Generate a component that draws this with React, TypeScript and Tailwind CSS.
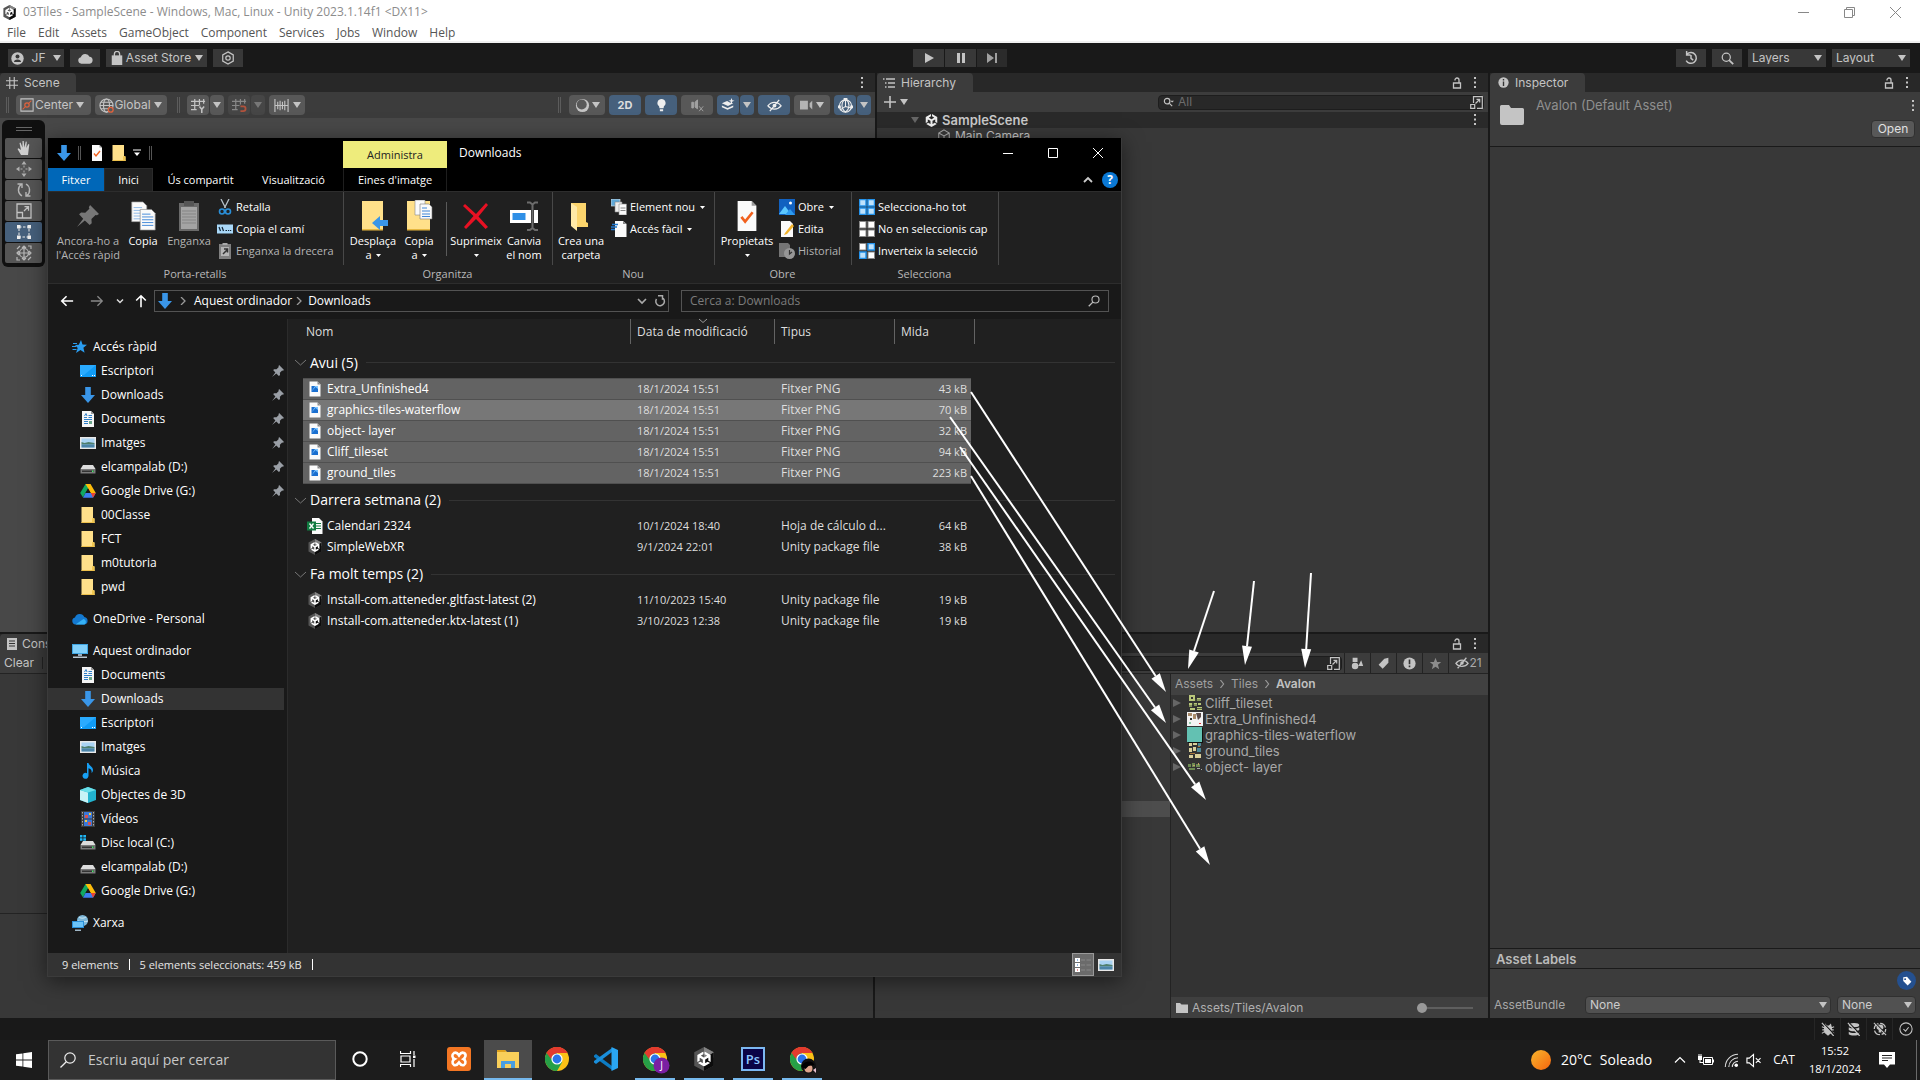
import React from "react";
import { SiUnity } from "react-icons/si";

type Kids = { children?: React.ReactNode };

function Ico({ s = 16, c = "", vb = "0 0 16 16", children }: Kids & { s?: number; c?: string; vb?: string }) {
  return (
    <svg width={s} height={s} viewBox={vb} className={"shrink-0 " + c} fill="none" aria-hidden="true">
      {children}
    </svg>
  );
}

const Caret = ({ c = "text-[#c4c4c4]" }: { c?: string }) => (
  <svg width="8" height="6" viewBox="0 0 8 6" className={"shrink-0 " + c} aria-hidden="true"><path d="M0 0h8L4 6z" fill="currentColor" /></svg>
);
const TinyCaret = () => (
  <svg width="5" height="3" viewBox="0 0 5 3" className="shrink-0" aria-hidden="true"><path d="M0 0h5L2.500 3z" fill="#fff" /></svg>
);
const Dots = () => (
  <Ico s={12} vb="0 0 12 12"><path d="M5 0h2v2H5zM5 4.500h2v2H5zM5 9h2v2H5z" fill="#c4c4c4" /></Ico>
);
const Lock = () => (
  <Ico s={12} vb="0 0 12 12"><path d="M2.500 6h7v5h-7zM4 3.500V3a2 2 0 0 1 4 0v3" stroke="#c4c4c4" strokeWidth="1.300" /></Ico>
);
const Popout = () => (
  <Ico s={13} vb="0 0 13 13"><path d="M3.500 7V.7h8.800v11.600H7M.7 8.500h4v3.800h-4zM5.500 7.500l4-4M6.500 3.300h3.200v3.200" stroke="#c4c4c4" strokeWidth="1.200" /></Ico>
);

/* ---------- Explorer icons ---------- */
const DownArrow = ({ s = 16 }: { s?: number }) => (
  <Ico s={s}><path d="M5.200 0h5.600v8H15l-7 8-7-8h4.200z" fill="#3a96e8" /></Ico>
);
const Folder = ({ s = 16 }: { s?: number }) => (
  <Ico s={s}><path d="M1.500 0H13v11l1.500.5V16h-13z" fill="#ffe08a" /><path d="M13 11l1.500.5V16H12v-4.500z" fill="#f0c650" /><path d="M1.500 15h13v1h-13z" fill="#eec14c" /></Ico>
);
const Desktop = () => (
  <Ico><path d="M0 2h16v12H0z" fill="#109bf5" /><path d="M0 2h16L4 12H0z" fill="#2aabff" /><path d="M1 12.500h1M12 12.500h1M14 12.500h1" stroke="#fff" /></Ico>
);
const Doc = () => (
  <Ico><path d="M2 0h9l3 3v13H2z" fill="#f5f5f5" /><path d="M11 0v3h3z" fill="#999" /><path d="M4 6.500h3M8.500 4.500H12M8.500 6.500H12M4 8.500h8M4 10.500h4M4 12.500h4" stroke="#2f7fc8" /><path d="M4.500 5L6 2.500 7 5" stroke="#2f7fc8" /><path d="M9 10h3v3H9z" fill="#6aa58a" /></Ico>
);
const Picture = () => (
  <Ico><path d="M0 2h16v12H0z" fill="#e8e8e8" /><path d="M1.500 3.500h13v9h-13z" fill="#a9d3f3" /><path d="M1.500 7l3 1 4-1 6 1v1.500h-13z" fill="#4f7f6d" /><path d="M1.500 9.500h13v3h-13z" fill="#4b84a8" /></Ico>
);
const Drive = ({ win = false }: { win?: boolean }) => (
  <Ico>
    {win && <path d="M0 0h2.500v2.500H0zM3.300 0h2.700v2.500H3.300zM0 3.300h2.500v2.500H0zM3.300 3.300h2.700v2.500H3.300z" fill="#1fb6f5" />}
    <path d="M3 6h10l2.500 4H.5z" fill="#dcdcdc" /><path d="M.5 10h15v4.500H.5z" fill="#7b7b7b" /><path d="M2 11.500h12v1.500H2z" fill="#333" /><path d="M12 11.500h1.500V13H12z" fill="#46e36a" />
  </Ico>
);
const GDrive = () => (
  <Ico><path d="M5.500 1h5L8 5.500 3 14.500.2 10z" fill="#11a861" /><path d="M5.500 1h5l5.300 9h-5z" fill="#fdbc0b" /><path d="M5.500 10h10.300L13 14.700H3z" fill="#3c7ff0" /><path d="M10.800 10h5L13 14.700z" fill="#ea4335" /><path d="M8 5.500L10.500 10h-5z" fill="#191919" /></Ico>
);
const Star = () => (
  <Ico><path d="M9 1l1.500 4.500 4.500.2-3.600 3 1.200 5L8.500 11 4 14l1.700-5L3 6l3.800-.3z" fill="#2a9df0" /><path d="M0 7.500h4M.5 10.500h4M1 4.500h4" stroke="#2a9df0" /></Ico>
);
const Cloud = () => (
  <Ico><path d="M3.500 13.500A3.500 3.500 0 0 1 3 6.600 5 5 0 0 1 12.300 6 3.800 3.800 0 0 1 12.500 13.500z" fill="#1479d0" /><path d="M3.500 13.500l8-5.500a3 3 0 0 1 1 5.500z" fill="#35b1f5" /></Ico>
);
const Pc = () => (
  <Ico><path d="M0 1h16v10H0z" fill="#3fa5e2" /><path d="M1 2h14v8H1z" fill="#82d0fa" /><path d="M6 11h4v2H6z" fill="#9ab" /><path d="M1 13.500h14V15H1z" fill="#b9c7d2" /></Ico>
);
const Note = () => (
  <Ico><path d="M7 0h1.500c.5 3 4.500 3.500 4.500 7 0 1.500-.8 2.600-1.500 3 .6-2.500-.5-4-3-4.700V12.500A3 3 0 1 1 7 10.200z" fill="#17a0f5" /></Ico>
);
const Cube = () => (
  <Ico><path d="M8 0l8 3v10l-8 3-8-3V3z" fill="#22b3cf" /><path d="M0 3l8 2.500V16l-8-3z" fill="#c7f3f7" /><path d="M8 0l8 3-8 2.500L0 3z" fill="#6adfe9" /></Ico>
);
const Film = () => (
  <Ico><path d="M1 0h14v16H1z" fill="#3c3c3c" /><path d="M4 1h8v6.500H4zM4 8.500h8V15H4z" fill="#3b78d8" /><path d="M5 4h3v3H5zM8 11h3v3H8z" fill="#d9534f" /><path d="M9 2h2v2H9zM5 9h2v2H5z" fill="#f2c744" /><path d="M2.500 1v14M13.500 1v14" stroke="#aaa" strokeDasharray="1.500 1.500" /></Ico>
);
const Net = () => (
  <Ico><circle cx="10.500" cy="5.500" r="5.500" fill="#7db7d8" /><path d="M7 2c2 2 6 1 7 0M6 6c3 1 7 1 10 0" stroke="#d4ecf7" /><path d="M0 6h12v7H0z" fill="#2a8fd8" /><path d="M1 7h10v5H1z" fill="#6cc4f8" /><path d="M3 14.500h6V16H3z" fill="#9fb6c6" /></Ico>
);
const Pin = ({ s = 12, c = "#9a9fa6" }: { s?: number; c?: string }) => (
  <Ico s={s}><path d="M9.500 0L16 6.500l-1.500 1-1-.3-3 3 .2 3-1.500 1.300-3.500-3.300L0 16l4.500-6L1.500 6.800 3 5.500l3 .2 3-3-.4-1z" fill={c} /></Ico>
);
const Png = () => (
  <Ico><path d="M2.500.5h8l3 3v12h-11z" fill="#fafafa" /><path d="M10.500.5v3h3z" fill="#888" /><path d="M4.500 5h6.500v6H4.500z" fill="#1a6fd0" /><path d="M4.500 10.500L8.500 6l2.500 2V5H8z" fill="#7cc4ff" /></Ico>
);
const Xls = () => (
  <Ico><path d="M5 0h7l3.500 3.500V16H5z" fill="#fafafa" /><path d="M9 5.500h5M9 8h5M9 10.500h5" stroke="#107c41" /><path d="M0 3.500h9v9H0z" fill="#107c41" /><path d="M2.500 5.500l4 5M6.500 5.500l-4 5" stroke="#fff" strokeWidth="1.300" /></Ico>
);
const UnityCube = ({ s = 16 }: { s?: number }) => (
  <Ico s={s}>
    <path d="M8 0l6.500 3.500v9L8 16l-6.500-3.500v-9z" fill="#555" /><path d="M8 0l6.500 3.500V7L8 8z" fill="#858585" /><path d="M8 8l6.500-4.500v9L8 16z" fill="#0c0c0c" />
    <SiUnity x={3} y={3} size={10} color="#fff" />
  </Ico>
);
const PageCheck = ({ s = 16 }: { s?: number }) => (
  <Ico s={s}><path d="M3 0h7.500L13 2.500V16H3z" fill="#fafafa" /><path d="M10.500 0v2.500H13z" fill="#999" /><path d="M5 8.500l2 2.500 4-5" stroke="#f1601d" strokeWidth="1.400" /></Ico>
);
const Pages = ({ s = 16 }: { s?: number }) => (
  <Ico s={s} vb="0 0 32 32"><path d="M4 1h12l4 4v17H4z" fill="#fafafa" stroke="#999" strokeWidth=".7" /><path d="M6 7h9M6 10h12M6 13h8M6 16h8M6 19h8" stroke="#8db9e8" /><path d="M13 9h12l4 4v18H13z" fill="#fafafa" stroke="#888" strokeWidth=".7" /><path d="M15 14h9M15 17h12M15 20h12M15 23h12M15 26h12" stroke="#3f86d8" /></Ico>
);

const Chrome = ({ s = 24, children }: Kids & { s?: number }) => (
  <Ico s={s + 3} vb="0 0 27 27">
    <circle cx="12" cy="12" r="12" fill="#fbc116" />
    <path d="M12 12L1.600 6A12 12 0 0 0 12 24l5.200-9z" fill="#26a047" />
    <path d="M1.600 6A12 12 0 0 1 22.400 6H12L7 9z" fill="#e33b2e" />
    <path d="M1.600 6l5.200 9L12 12V6z" fill="#26a047" />
    <path d="M1.600 6A12 12 0 0 1 22.400 6H12l-4 2-2 4z" fill="#e33b2e" />
    <circle cx="12" cy="12" r="5.600" fill="#fff" />
    <circle cx="12" cy="12" r="4.400" fill="#2b75ea" />
    {children}
  </Ico>
);

/* ---------- Unity chrome ---------- */
const TB = ({ w, children, label, dim = false }: Kids & { w: string; label: string; dim?: boolean }) => (
  <button aria-label={label} className={"flex h-[18px] shrink-0 items-center justify-center gap-1 " + w + (dim ? " bg-[#2b2b2b]" : " bg-[#383838]")}>{children}</button>
);
const SB = ({ w, children, label, on = false, dim = false }: Kids & { w: string; label: string; on?: boolean; dim?: boolean }) => (
  <button aria-label={label} className={"flex h-5 shrink-0 items-center justify-center gap-0.5 rounded-sm " + w + (on ? " bg-[#46607c]" : dim ? " bg-[#464646]" : " bg-[#585858]")}>{children}</button>
);
const Grip = () => <span className="h-4 w-[3px] shrink-0 border-x border-[#5c5c5c]" />;

function Select({ label, value, w, c }: { label: string; value: string; w: string; c: string }) {
  return (
    <div className={"relative flex items-center " + w}>
      <select aria-label={label} defaultValue={value} className={"w-full appearance-none pl-1 pr-5 leading-none " + c}>
        <option>{value}</option>
      </select>
      <span className="pointer-events-none absolute right-1"><Caret /></span>
    </div>
  );
}

function TabRow({ icon, title, w, right }: { icon: React.ReactNode; title: string; w: string; right?: React.ReactNode }) {
  return (
    <div className="flex h-[19px] shrink-0 items-center justify-between bg-[#282828]">
      <h2 className={"flex h-full items-center gap-1.5 overflow-hidden rounded-t-sm bg-[#3c3c3c] pl-1.5 whitespace-nowrap " + w}>{icon}{title}</h2>
      <div className="flex items-center gap-1.5 pr-[7px]">{right}</div>
    </div>
  );
}

const MENU = ["File", "Edit", "Assets", "GameObject", "Component", "Services", "Jobs", "Window", "Help"];

function UnityTop() {
  return (
    <>
      <header className="shrink-0 border-b-2 border-[#f0f0f0] bg-white font-['Open_Sans',sans-serif] text-[12px] text-[#555]">
        <div className="flex h-6 items-center justify-between">
          <div className="flex items-center gap-1.5 pl-0.5 text-[#8c8c8c]"><UnityCube s={15} />03Tiles - SampleScene - Windows, Mac, Linux - Unity 2023.1.14f1 &lt;DX11&gt;</div>
          <div className="flex h-5 items-center gap-[33px] pr-[18px] text-[#888]">
            <button aria-label="Minimize"><Ico s={13} vb="0 0 13 13"><path d="M1 6.500h11" stroke="currentColor" /></Ico></button>
            <button aria-label="Restore"><Ico s={13} vb="0 0 13 13"><path d="M1.500 3.500h8v8h-8zM3.500 3V1.500h8v8H10" stroke="currentColor" /></Ico></button>
            <button aria-label="Close"><Ico s={13} vb="0 0 13 13"><path d="M1 1l11 11M12 1L1 12" stroke="currentColor" /></Ico></button>
          </div>
        </div>
        <nav className="flex h-[17px] items-center gap-3 pl-[7px]">{MENU.map((m) => <button key={m}>{m}</button>)}</nav>
      </header>
      <div className="grid h-[30px] shrink-0 grid-cols-[1fr_94px_1fr] items-center bg-[#191919]">
        <div className="flex items-center gap-1.5 pl-2">
          <TB w="w-14" label="Account"><Ico s={13} vb="0 0 13 13"><circle cx="6.500" cy="6.500" r="6.200" fill="#c4c4c4" /><circle cx="6.500" cy="4.500" r="2" fill="#383838" /><path d="M3 10a3.500 2.500 0 0 1 7 0z" fill="#383838" /></Ico><span className="px-1">JF</span><Caret /></TB>
          <TB w="w-[30px]" label="Cloud"><Ico s={15}><path d="M3.500 13.500A3.500 3.500 0 0 1 3 6.600 5 5 0 0 1 12.300 6 3.800 3.800 0 0 1 12.500 13.500z" fill="#c4c4c4" /></Ico></TB>
          <TB w="w-[101px]" label="Asset Store"><Ico s={14} c="-mr-0.5"><path d="M2 5h12v11H2z" fill="#c4c4c4" /><path d="M5 7V3.500a3 3 0 0 1 6 0V7" stroke="#c4c4c4" strokeWidth="1.500" /></Ico>Asset Store<Caret /></TB>
          <TB w="w-[30px]" label="Package services"><Ico s={14}><path d="M8 1l6 3.500v7L8 15l-6-3.500v-7z" stroke="#c4c4c4" strokeWidth="1.400" /><circle cx="8" cy="8" r="2.500" stroke="#c4c4c4" strokeWidth="1.400" /></Ico></TB>
        </div>
        <div className="flex gap-px">
          <TB w="w-[31px]" label="Play"><Ico s={12} vb="0 0 12 12"><path d="M2 1l9 5-9 5z" fill="#c4c4c4" /></Ico></TB>
          <TB w="w-[31px]" label="Pause"><Ico s={12} vb="0 0 12 12"><path d="M2 1h3v10H2zM7 1h3v10H7z" fill="#c4c4c4" /></Ico></TB>
          <TB w="w-[30px]" label="Step" dim><Ico s={12} vb="0 0 12 12"><path d="M1 1l7 5-7 5zM9 1h2v10H9z" fill="#a0a0a0" /></Ico></TB>
        </div>
        <div className="flex items-center justify-end gap-1.5 pr-2.5">
          <TB w="w-[30px]" label="Undo history"><Ico s={14}><path d="M3.500 3.500a6.200 6.200 0 1 1-1 7.500M3 0v4.500h4.500M8 4.500v4l2.500 2" stroke="#c4c4c4" strokeWidth="1.700" /></Ico></TB>
          <TB w="w-[30px]" label="Search"><Ico s={13}><circle cx="6.500" cy="6.500" r="5" stroke="#c4c4c4" strokeWidth="1.500" /><path d="M10 10l5 5" stroke="#c4c4c4" strokeWidth="2.200" /></Ico></TB>
          <Select label="Layers" value="Layers" w="w-[78px]" c="h-[18px] bg-[#383838]" />
          <Select label="Layout" value="Layout" w="w-[78px]" c="h-[18px] bg-[#383838]" />
        </div>
      </div>
    </>
  );
}

const Globe = ({ c = "#c4c4c4", children }: Kids & { c?: string }) => (
  <Ico s={15} c="-mr-0.5"><circle cx="8" cy="8" r="7" stroke={c} strokeWidth="1.200" /><ellipse cx="8" cy="8" rx="3.200" ry="7" stroke={c} strokeWidth="1.200" /><path d="M1 8h14M2 4.500h12M2 11.500h12" stroke={c} strokeWidth="1.200" />{children}</Ico>
);
const GridI = ({ c = "#c4c4c4", children }: Kids & { c?: string }) => (
  <Ico s={15}><path d="M4 1v12M9 1v8M13.500 1v5M0 3.500h15M0 8h10M0 12.500h6" stroke={c} strokeWidth="1.300" />{children}</Ico>
);

function ScenePanel() {
  return (
    <section className="flex w-[875px] shrink-0 flex-col">
      <TabRow w="w-[76px]" title="Scene" right={<Dots />} icon={<Ico s={12}><path d="M5 0v16M11 0v16M0 5h16M0 11h16" stroke="#c4c4c4" strokeWidth="1.500" /></Ico>} />
      <div className="flex h-[26px] shrink-0 items-center justify-between bg-[#3c3c3c] px-1">
        <div className="flex items-center gap-1">
          <span className="mr-[3px] ml-0.5 flex"><Grip /></span>
          <SB w="w-[75px] pr-[3px]" label="Center"><Ico s={14} c="-mr-px"><path d="M1 1h14v14H1z" stroke="#c4c4c4" strokeWidth="1.200" /><circle cx="8" cy="8" r="2.500" stroke="#e0623c" strokeWidth="1.400" /><path d="M3 13l3-3M10 6l3-3" stroke="#e0623c" strokeWidth="1.200" /></Ico>Center<Caret c="ml-px text-[#c4c4c4]" /></SB>
          <SB w="w-[72px] pr-px" label="Global"><Globe><circle cx="12.500" cy="12.500" r="2.600" fill="#585858" stroke="#e0623c" strokeWidth="1.400" /></Globe>Global<Caret c="ml-px text-[#c4c4c4]" /></SB>
          <span className="mr-[3px] ml-1.5 flex"><Grip /></span>
          <div className="flex gap-px"><SB w="w-[22px]" label="Grid"><GridI><path d="M8.500 8h6v8h-6z" fill="#585858" /><path d="M9 9l2.500 3L14 9M11.500 12v4" stroke="#c4c4c4" strokeWidth="1.600" /></GridI></SB><SB w="w-3.5" label="Grid options"><Caret /></SB></div>
          <div className="flex gap-px"><SB dim w="w-[22px]" label="Snap"><GridI c="#888"><path d="M8 7h8v9H8z" fill="#464646" /><path d="M9 9h3a2.500 2.500 0 0 1 0 5H9" stroke="#b0523c" strokeWidth="1.900" /></GridI></SB><SB dim w="w-3.5" label="Snap options"><Caret c="text-[#777]" /></SB></div>
          <SB w="w-9" label="Increment snapping"><Ico s={15}><path d="M1 1v14M4 4v8M6.500 3v10M9 4v8M11.500 3v10M15 1v14M1 8h14" stroke="#c4c4c4" strokeWidth="1.200" /></Ico><span className="ml-0.5 flex"><Caret /></span></SB>
        </div>
        <div className="flex items-center gap-1">
          <span className="mr-1 flex"><Grip /></span>
          <SB w="w-9" label="Draw mode"><Ico s={15}><circle cx="8" cy="8" r="7" fill="#c4c4c4" /><circle cx="7.200" cy="7" r="5.300" fill="#585858" /></Ico><Caret /></SB>
          <SB on w="w-8" label="2D"><b className="text-[11px] text-[#ddd]">2D</b></SB>
          <SB on w="w-8" label="Lighting"><Ico s={13}><path d="M8 0a5 5 0 0 0-3 9l.5 2.500h5L11 9A5 5 0 0 0 8 0zM6 12.500h4V15H6z" fill="#eee" /></Ico></SB>
          <SB w="w-8" label="Audio"><Ico s={13}><path d="M1 4h2v7H1zM5 4l3-3v11l-3-2zM10 9l5 6M15 9l-5 6" stroke="#a0a0a0" strokeWidth="1.200" fill="#a0a0a0" /></Ico></SB>
          <div className="flex gap-px"><SB on w="w-[22px]" label="Effects"><Ico s={14}><path d="M1 6l6-2.500L10 5l4 1-6 3zM1 8.500l6.500 3 6.500-3v2L7.500 13.500 1 10.500zM12 0l1 2.500L15.500 3l-2.500 1-1 2.500-1-2.500L8.500 3 11 2.500z" fill="#eee" /></Ico></SB><SB on w="w-3.5" label="Effects options"><Caret /></SB></div>
          <SB on w="w-8" label="Hidden objects"><Ico s={15}><path d="M1 8.500c3.500-5 10.500-5 14 0-3.500 4.500-10.500 4.500-14 0zM3 14L13 2" stroke="#eee" strokeWidth="1.400" /><circle cx="8" cy="8" r="2" fill="#eee" /></Ico></SB>
          <SB w="w-9" label="Camera"><Ico s={14}><path d="M0 3h9v10H0zM11 6l3-3v10l-3-3z" fill="#b4b4b4" /></Ico><Caret /></SB>
          <div className="flex gap-px"><SB on w="w-[22px]" label="Gizmos"><Ico s={15}><circle cx="8" cy="8.500" r="6.500" stroke="#eee" strokeWidth="1.200" /><path d="M8 1v8M8 9l7 2M8 9l-6 4M8 1c-5 4-5 10 0 14M8 1c5 4 5 10 0 14" stroke="#eee" strokeWidth="1.100" /><path d="M6 0h4v3H6zM0 8h3v3H0zM13 8h3v3h-3z" fill="#eee" /></Ico></SB><SB on w="w-3.5" label="Gizmo options"><Caret /></SB></div>
        </div>
      </div>
      <div className="min-h-0 flex-1 bg-[#484848] pt-0.5 pl-0.5">
        <div className="flex w-[43px] flex-col gap-px rounded-md bg-[#101010] px-[3px] pb-1">
          <div className="flex h-[17px] items-center justify-center"><span className="h-1 w-4 border-y border-[#666]" /></div>
          {[
            ["Hand", <path key="a" d="M5 15L1.500 9l1-.7L5 10 3.500 3l1-.4L6.500 7.500V1h1.200l.6 6.500L9.800 1.500l1 .3-.5 6.200 2-4 1 .5L12 15z" fill="#d0d0d0" />],
            ["Move", <path key="a" d="M8 0l2.500 3.500h-5zM8 16l2.500-3.500h-5zM0 8l3.500-2.500v5zM16 8l-3.500-2.500v5zM7.500 4.500h1v2h-1zM7.500 9.500h1v2h-1zM4.500 7.500h2v1h-2zM9.500 7.500h2v1h-2z" fill="#b0b0b0" />],
            ["Rotate", <path key="a" d="M6 14A7 7 0 0 1 5 2.500M1.500 2H6v4M10 2a7 7 0 0 1 1 11.500M14.500 14H10v-4" stroke="#b8b8b8" strokeWidth="1.400" />],
            ["Scale", <path key="a" d="M1 1h14v14H1zM1 9.500h5.500V15M8 8l4-4M8.500 3.700h4v4" stroke="#c4c4c4" strokeWidth="1.300" />],
            ["Rect", <g key="a"><path d="M3 3h10v10H3z" stroke="#eee" strokeDasharray="2.500 1.500" /><path d="M1 1h3.500v3.500H1zM11.500 1H15v3.500h-3.500zM1 11.500h3.500V15H1zM11.500 11.500H15V15h-3.500z" fill="#eee" /></g>],
            ["Transform", <path key="a" d="M8 1v14M1 8h14M6 3l2-2 2 2M6 13l2 2 2-2M3 6L1 8l2 2M13 6l2 2-2 2M8 3.500a4.500 4.500 0 1 0 0 9 4.500 4.500 0 1 0 0-9M1 4l3-3M12 15l3-3M12 1h3v3M1 12v3h3" stroke="#b8b8b8" strokeWidth="1.200" />],
          ].map(([n, p], i) => (
            <button key={n as string} aria-label={n as string} className={"flex h-5 items-center justify-center rounded-xs " + (i === 4 ? "bg-[#46607c]" : "bg-[#555]")}><Ico s={16}>{p}</Ico></button>
          ))}
        </div>
      </div>
    </section>
  );
}

function ConsolePanel() {
  return (
    <section className="flex w-[873px] shrink-0 flex-col bg-[#383838]">
      <TabRow w="w-24" title="Console" icon={<Ico s={12} vb="0 0 12 12" c="-mr-0.5"><path d="M1 0h10v12H1z" fill="#c4c4c4" /><path d="M3 3h6M3 5.500h6M3 8h6" stroke="#333" /></Ico>} />
      <div className="flex h-[21px] shrink-0 items-center gap-2 border-b border-[#232323] bg-[#3c3c3c] pl-1">
        <button>Clear</button><span className="h-3 w-px bg-[#232323]" /><Caret />
      </div>
      <div className="h-60 shrink-0 border-b border-[#232323]" />
    </section>
  );
}

function HierarchyPanel() {
  return (
    <section className="flex min-w-0 flex-1 flex-col bg-[#383838]">
      <TabRow w="w-24" title="Hierarchy" right={<><Lock /><Dots /></>} icon={<Ico s={12} vb="0 0 12 12"><path d="M3 2h9M5 6h7M5 10h7M0 2h1.500M2 6h1.500M2 10h1.500" stroke="#c4c4c4" strokeWidth="1.400" /></Ico>} />
      <div className="flex h-5 shrink-0 items-center justify-between bg-[#3c3c3c] pr-1 pl-[7px]">
        <button aria-label="Add" className="flex items-center gap-1"><Ico s={12} vb="0 0 12 12"><path d="M6 0v12M0 6h12" stroke="#c4c4c4" strokeWidth="1.600" /></Ico><Caret /></button>
        <label className="flex h-[15px] w-[326px] items-center gap-1 rounded-sm border border-[#1d1d1d] bg-[#282828] pl-1">
          <Ico s={11} vb="0 0 12 12"><circle cx="4.500" cy="4.500" r="3" stroke="#c4c4c4" strokeWidth="1.300" /><path d="M7 7l3 3" stroke="#c4c4c4" strokeWidth="1.300" /><path d="M8 4h4l-2 2z" fill="#c4c4c4" /></Ico>
          <input aria-label="Search hierarchy" placeholder="All" className="min-w-0 flex-1 bg-transparent outline-none placeholder:text-[#6c6c6c]" />
          <Popout />
        </label>
      </div>
      <div className="flex h-4 shrink-0 items-center justify-between bg-[#2a2a2a] pr-[7px] pl-[34px]">
        <span className="flex items-center gap-1 text-[13px] font-semibold text-[#c8c8c8]"><Caret c="mr-0.5 text-[#666]" /><SiUnity size={13} color="#eee" />SampleScene</span>
        <Dots />
      </div>
      <div className="flex h-4 shrink-0 items-center gap-1 pl-[60px]"><Ico s={14}><path d="M8 1l6 3.500v7L8 15l-6-3.500v-7zM2 4.500L8 8l6-3.500M8 8v7" stroke="#aaa" strokeWidth="1.200" /></Ico>Main Camera</div>
    </section>
  );
}

const ASSETS: [string, React.ReactNode][] = [
  ["Cliff_tileset", <><path d="M2 0h6v6H2zM10 3h4v3h-4zM2 8h3v4H2zM7 8h3v3H7zM11 8h3v2h-3zM3 13h5v2H3zM10 12h5v3h-5z" fill="#b9c77a" /><path d="M4 2h2v2H4z" fill="#333" /><path d="M10 13.500h5M2 11h3M7 10h3M8 5h6M5 9h2" stroke="#55623d" /></>],
  ["Extra_Unfinished4", <><path d="M0 1h16v14H0z" fill="#f3f3f3" /><path d="M1 2h4v3H1zM6 3h3v5H6z" fill="#a98b6a" /><path d="M9 2h5v4l-3 3z" fill="#5a4a48" /><path d="M3 7h2v2H3z" fill="#333" /><path d="M2 11h2v2H2z" fill="#8fc9a8" /><path d="M12 12h2v1h-2z" fill="#d33" /></>],
  ["graphics-tiles-waterflow", <><path d="M1 1h15v15H1z" fill="#111" /><path d="M0 0h15v15H0z" fill="#63c1b2" /></>],
  ["ground_tiles", <><path d="M2 0h3v3H2zM6 0h4v2H6zM2 5h3v4H2zM6 4h3v4H6zM2 12h4v3H2zM8 11h6v4H8z" fill="#d9cf9b" /><path d="M11 0h3v3h-3zM10 5h4v4h-4z" fill="#4d8796" /><path d="M3 10h5v1H3zM11 3h2v1h-2z" fill="#a7763d" /></>],
  ["object- layer", <><path d="M1 5h3v3H1zM5 4h3v4H5zM9 5h4v3H9zM2 9h6v2H2z" fill="#6d8b52" /><path d="M10 9h3v1h-3zM14 10h1v1h-1z" fill="#aaa" /><path d="M6 6h2v1H6zM11 4h1v2h-1z" fill="#c3a368" /></>],
];

function ProjectPanel() {
  const tools: [string, React.ReactNode][] = [
    ["Search by type", <path key="a" d="M2 1h6v5H2zM1 11a4 4 0 1 0 8 0 4 4 0 1 0-8 0M9 11l3.500-7L15 11z" fill="#c4c4c4" />],
    ["Search by label", <path key="a" d="M9 2l5-1v6l-7 7.500L2 9.500z" fill="#c4c4c4" />],
    ["Search by import log", <g key="a"><circle cx="8" cy="8" r="7.500" fill="#c4c4c4" /><path d="M7 3h2v6H7zM7 10.500h2v2H7z" fill="#333" /></g>],
    ["Favorites", <path key="a" d="M8 1l2 5h5l-4 3.500 1.500 5.500L8 12l-4.500 3L5 9.500 1 6h5z" fill="#8c8c8c" />],
  ];
  return (
    <section className="flex min-w-0 flex-1 flex-col bg-[#383838]">
      <TabRow w="w-20" title="Project" right={<><Lock /><Dots /></>} icon={<Ico s={12} vb="0 0 12 12"><path d="M0 2h5l1 1h6v8H0z" fill="#c4c4c4" /></Ico>} />
      <div className="flex h-[21px] shrink-0 items-center border-b border-[#232323] bg-[#3c3c3c]">
        <button aria-label="Create" className="flex items-center gap-1 pl-[7px]"><Ico s={12} vb="0 0 12 12"><path d="M6 0v12M0 6h12" stroke="#c4c4c4" strokeWidth="1.600" /></Ico><Caret /></button>
        <label className="mr-0.5 ml-8 flex h-[15px] min-w-0 flex-1 items-center rounded-sm border border-[#1d1d1d] bg-[#282828] pr-px pl-1">
          <input aria-label="Search project" className="min-w-0 flex-1 bg-transparent outline-none" />
          <Popout />
        </label>
        {tools.map(([n, p]) => (
          <button key={n} aria-label={n} className="flex h-5 w-[26px] items-center justify-center border-l border-[#232323]"><Ico s={13}>{p}</Ico></button>
        ))}
        <button className="flex h-5 w-10 items-center justify-center border-l border-[#232323] text-[#aaa]"><Ico s={14}><path d="M1 8.500c3.500-5 10.500-5 14 0-3.500 4.500-10.500 4.500-14 0zM3 14L13 2" stroke="#c4c4c4" strokeWidth="1.400" /><circle cx="8" cy="8" r="2" fill="#c4c4c4" /></Ico>21</button>
      </div>
      <div className="flex min-h-0 flex-1">
        <div className="w-[296px] shrink-0 border-r border-[#232323] pt-[127px]"><div className="h-4 bg-[#4d4d4d]" /></div>
        <div className="flex min-w-0 flex-1 flex-col bg-[#333]">
          <nav className="flex h-[21px] shrink-0 items-center gap-[5px] bg-[#414141] pb-px pl-1 text-[#a0a0a0]">
            <a href="#assets">Assets</a><Ico s={8} vb="0 0 8 10"><path d="M2 0l4 5-4 5" stroke="#999" strokeWidth="1.500" /></Ico>
            <a href="#tiles">Tiles</a><Ico s={8} vb="0 0 8 10"><path d="M2 0l4 5-4 5" stroke="#999" strokeWidth="1.500" /></Ico>
            <b className="font-semibold text-[#c0c0c0]">Avalon</b>
          </nav>
          <ul className="flex-1">
            {ASSETS.map(([n, p]) => (
              <li key={n} className="flex h-4 items-center gap-0.5 pl-0.5 text-[13px] text-[#a8a8a8]">
                <svg width="8" height="8" viewBox="0 0 8 8" className="mr-1 shrink-0" aria-hidden="true"><path d="M0 0l8 4-8 4z" fill="#666" /></svg>
                <Ico s={16}>{p}</Ico>{n}
              </li>
            ))}
          </ul>
          <div className="flex h-[21px] shrink-0 items-center gap-1 bg-[#3f3f3f] pr-[15px] pl-[5px] text-[#b0b0b0]">
            <Ico s={12} vb="0 0 12 12"><path d="M0 1h4l1.500 1.500H12V11H0z" fill="#c4c4c4" /></Ico>
            <span className="flex-1">Assets/Tiles/Avalon</span>
            <input type="range" aria-label="Icon size" defaultValue={0} className="h-3 w-14 appearance-none bg-transparent [&::-webkit-slider-runnable-track]:h-0.5 [&::-webkit-slider-runnable-track]:bg-[#5e5e5e] [&::-webkit-slider-thumb]:-mt-1 [&::-webkit-slider-thumb]:h-2.5 [&::-webkit-slider-thumb]:w-2.5 [&::-webkit-slider-thumb]:appearance-none [&::-webkit-slider-thumb]:rounded-full [&::-webkit-slider-thumb]:bg-[#999]" />
          </div>
        </div>
      </div>
    </section>
  );
}

function InspectorPanel() {
  return (
    <aside className="flex w-[430px] shrink-0 flex-col bg-[#383838]">
      <TabRow w="w-[95px]" title="Inspector" right={<><Lock /><Dots /></>} icon={<Ico s={11} c="ml-0.5"><circle cx="8" cy="8" r="7.500" fill="#c4c4c4" /><path d="M7 3h2v2H7zM7 6.500h2V13H7z" fill="#333" /></Ico>} />
      <div className="flex h-[55px] shrink-0 justify-between border-b border-[#1a1a1a] bg-[#3c3c3c] pl-2">
        <Ico s={26} vb="0 0 26 26" c="mt-2.5"><path d="M2 4.500Q2 3 3.500 3H11l2 3h11.500Q26 6 26 7.500V21q0 2-2 2H4q-2 0-2-2z" fill="#c4c4c4" /></Ico>
        <h3 className="ml-3 flex-1 pt-[5px] text-[13px] leading-4 text-[#8f8f8f]">Avalon (Default Asset)</h3>
        <div className="flex flex-col items-end justify-between pt-2 pr-[5px] pb-2"><span className="-mr-1 flex"><Dots /></span><button className="h-[18px] w-11 rounded-sm border border-[#303030] bg-[#585858] leading-none text-[#e0e0e0]">Open</button></div>
      </div>
      <div className="flex-1" />
      <h3 className="flex h-[21px] shrink-0 items-center border-y border-[#1a1a1a] bg-[#3c3c3c] pl-1.5 text-[13px] font-semibold text-[#bbb]">Asset Labels</h3>
      <div className="flex h-[49px] shrink-0 flex-col justify-between bg-[#3c3c3c] pt-0.5 pr-1 pb-1 pl-1">
        <button aria-label="Labels" className="flex size-[19px] items-center justify-center self-end rounded-full bg-[#24508f]"><Ico s={10}><path d="M2 2l6-1 7 8-6 6-7-7z" fill="#fff" /><circle cx="5" cy="5" r="1.500" fill="#24508f" /></Ico></button>
        <div className="flex items-center gap-1.5 text-[#a8a8a8]">
          <span className="w-[85px]">AssetBundle</span>
          <Select label="AssetBundle" value="None" w="flex-1" c="h-[18px] rounded-sm border border-[#303030] bg-[#515151] text-[#ccc]" />
          <Select label="Variant" value="None" w="w-[79px]" c="h-[18px] rounded-sm border border-[#303030] bg-[#515151] text-[#ccc]" />
        </div>
      </div>
    </aside>
  );
}

function UnityStatus() {
  const icons = [
    <g key="a"><path d="M5 3l1.500 1.500h3L11 3l1 4-.5 5-3.500 3-3.500-3L4 7zM1 5.500l3 1M15 5.500l-3 1M1 13l3-2M15 13l-3-2M1.500 9h3M14.500 9h-3" fill="#c4c4c4" stroke="#c4c4c4" strokeWidth="1.200" /><path d="M2.500 1L16 15" stroke="#191919" strokeWidth="1.400" /><path d="M1 1l13.500 15" stroke="#c4c4c4" strokeWidth="1.300" /></g>,
    <g key="b"><ellipse cx="8" cy="3.500" rx="6" ry="2.500" fill="#c4c4c4" /><path d="M2 6c2 2 10 2 12 0v3c-2 2-10 2-12 0zM2 11c2 2 10 2 12 0v3c-2 2-10 2-12 0z" fill="#c4c4c4" /><path d="M2.500 1L16 15" stroke="#191919" strokeWidth="1.400" /><path d="M1 1l13.500 15" stroke="#c4c4c4" strokeWidth="1.300" /></g>,
    <g key="c"><circle cx="8" cy="8" r="6.500" stroke="#c4c4c4" strokeWidth="1.500" strokeDasharray="8 2" /><path d="M8 3a3 3 0 0 0-1.500 6v3h3V9A3 3 0 0 0 8 3z" fill="#c4c4c4" /><path d="M2.500 1L16 15" stroke="#191919" strokeWidth="1.400" /><path d="M1 1l14 14" stroke="#c4c4c4" strokeWidth="1.300" /></g>,
    <g key="d"><circle cx="8" cy="8" r="7" stroke="#c4c4c4" strokeWidth="1.200" /><path d="M5 8l2.500 2.500L11 6" stroke="#c4c4c4" strokeWidth="1.200" /></g>,
  ];
  return (
    <div className="flex h-[22px] shrink-0 items-center justify-end bg-[#191919] pr-0.5">
      {icons.map((p, i) => <button key={i} aria-label={"Status " + (i + 1)} className="flex h-full w-[26px] items-center justify-center border-l border-[#262626]"><Ico s={14}>{p}</Ico></button>)}
    </div>
  );
}

/* ---------- File explorer ---------- */
function Big({ w, icon, lines, caret = false, dim = false }: { w: string; icon: React.ReactNode; lines: string[]; caret?: boolean; dim?: boolean }) {
  return (
    <button className={"flex h-[75px] shrink-0 flex-col items-center pt-2 whitespace-nowrap " + w + (dim ? " text-[#b4b4b4]" : " text-white")}>
      <span className="mb-0.5 flex h-8 items-center">{icon}</span>
      {lines.map((l, i) => (
        <span key={i} className="flex h-3.5 items-center gap-1 leading-[14px]">{l}{caret && i === lines.length - 1 && <TinyCaret />}</span>
      ))}
    </button>
  );
}
function Small({ icon, text, caret = false, dim = false }: { icon: React.ReactNode; text: string; caret?: boolean; dim?: boolean }) {
  return (
    <button className={"flex h-[22px] items-center gap-[3px] whitespace-nowrap " + (dim ? "text-[#b4b4b4]" : "text-white")}>{icon}{text}{caret && <span className="ml-0.5 flex"><TinyCaret /></span>}</button>
  );
}
function Group({ w, label, children }: Kids & { w: string; label: string }) {
  return (
    <div className={"shrink-0 " + w}>
      <div className="mt-0.5 h-[73px] border-r border-[#484848]"><div className="-mt-0.5 flex">{children}</div></div>
      <div className="pt-px pr-0.5 text-center leading-4 text-[#b8b8b8]">{label}</div>
    </div>
  );
}
const Col = ({ children, c = "" }: Kids & { c?: string }) => <div className={"flex flex-col items-start pt-1 " + c}>{children}</div>;

const Squares = ({ f }: { f: string[] }) => (
  <Ico>
    {[[0, 0], [8.5, 0], [0, 8.5], [8.5, 8.5]].map(([x, y], i) => (
      <rect key={i} x={x + 0.5} y={y + 0.5} width="6.500" height="6.500" fill={f[i] === "b" ? "#bfe2fb" : "#fff"} stroke={f[i] === "b" ? "#2492ea" : "#888"} strokeWidth={f[i] === "b" ? 1.5 : 1} />
    ))}
  </Ico>
);

function Ribbon() {
  const clip = (
    <Ico s={32} vb="0 0 32 32"><path d="M6 3h20v28H6z" fill="#6a6a6a" /><path d="M8 7h16v22H8z" fill="#a4a4a4" /><path d="M11 1h10v5H11z" fill="#555" /><path d="M9 11h14M9 14h14M9 17h14M9 20h14M9 23h14" stroke="#858585" /></Ico>
  );
  return (
    <div className="flex h-[93px] shrink-0 overflow-hidden border-y border-[#2d2d2d] bg-[#202020] text-[11px]">
      <Group w="w-[296px]" label="Porta-retalls">
        <Big dim w="ml-1 w-[72px]" icon={<Pin s={22} c="#777" />} lines={["Ancora-ho a", "l'Accés ràpid"]} />
        <Big w="w-[38px]" icon={<Pages s={30} />} lines={["Copia"]} />
        <Big dim w="w-[54px]" icon={clip} lines={["Enganxa"]} />
        <Col c="ml-px">
          <Small icon={<Ico><path d="M4 0l4.500 9M12 0L7.500 9" stroke="#b5c0c8" strokeWidth="1.300" /><circle cx="5" cy="12.500" r="2.500" stroke="#2a8fd8" strokeWidth="1.600" /><circle cx="11" cy="12.500" r="2.500" stroke="#2a8fd8" strokeWidth="1.600" /></Ico>} text="Retalla" />
          <Small icon={<Ico><path d="M0 3.500h16v9H0z" fill="#a9d8f8" /><path d="M2 6l1.500 4M5 6l1.500 4M8.500 9.500H10M11 9.500h1.200M13 9.500h1.200" stroke="#123" strokeWidth="1.200" /></Ico>} text="Copia el camí" />
          <Small dim icon={<Ico><path d="M2 1h12v15H2z" fill="#808080" /><path d="M4 4h8v9H4z" fill="#b5b5b5" /><path d="M6 11l4-4M7 6h3.500v3.500" stroke="#333" strokeWidth="1.500" /><path d="M5.500 0h5v2h-5z" fill="#aaa" /></Ico>} text="Enganxa la drecera" />
        </Col>
      </Group>
      <Group w="w-[209px]" label="Organitza">
        <Big w="ml-1.5 w-[46px]" caret icon={<Ico s={32} vb="0 0 32 32"><path d="M5 1h21v29H5z" fill="#ffe08a" /><path d="M5 29h21v1.500H5z" fill="#e6b73f" /><path d="M15 23l8-7v4h8v6h-8v4z" fill="#3a96e8" /></Ico>} lines={["Desplaça", "a"]} />
        <Big w="w-[46px]" caret icon={<Ico s={32} vb="0 0 32 32"><path d="M4 1h23v29H4z" fill="#ffe08a" /><path d="M4 29h23v1.500H4z" fill="#e6b73f" /><path d="M12 0h10v15H12z" fill="#fafafa" stroke="#888" strokeWidth=".6" /><path d="M17 4h9l3 3v12H17z" fill="#fafafa" stroke="#777" strokeWidth=".6" /><path d="M19 8h5M19 11h8M19 14h8M19 16.500h8" stroke="#3f86d8" /></Ico>} lines={["Copia", "a"]} />
        <span className="mx-1 mt-2.5 h-[54px] w-px bg-[#5a5a5a]" />
        <Big w="w-[50px]" caret icon={<Ico s={30} vb="0 0 30 30"><path d="M4 3l11 10L25 2l2 2-9.500 11.500L27 26l-2.500 2L15 18 5 28l-2-2 9.500-11L2 5z" fill="#e81123" /></Ico>} lines={["Suprimeix", ""]} />
        <Big w="w-[46px]" icon={<Ico s={30} vb="0 0 30 30"><path d="M1 9h21v13H1zM25 9h4v13h-4z" fill="#fff" /><path d="M3.500 12h13v7h-13z" fill="#2f8fe6" /><path d="M18 1.500h3l2.500 2 2.500-2h3M18 29h3l2.500-2 2.500 2h3M23.500 3.500v23.500" stroke="#6c6c6c" strokeWidth="2" /></Ico>} lines={["Canvia", "el nom"]} />
      </Group>
      <Group w="w-[162px]" label="Nou">
        <Big w="ml-[5px] w-[46px]" icon={<Ico s={30} vb="0 0 30 30"><path d="M5 2h15v19l2 1v4H9z" fill="#fbd46c" /><path d="M5 2l6 4v24l-6-5z" fill="#ffe9a6" /></Ico>} lines={["Crea una", "carpeta"]} />
        <Col c="ml-[7px]">
          <Small caret icon={<Ico><path d="M0 0h9v7H0z" fill="#5fa8d8" stroke="#ddd" strokeWidth=".7" /><path d="M4 3h7v10H4z" fill="#eee" stroke="#888" strokeWidth=".6" /><path d="M8 5h7.500v11H8z" fill="#fafafa" stroke="#888" strokeWidth=".6" /><path d="M9.500 9h5M9.500 11.500h5" stroke="#888" /></Ico>} text="Element nou" />
          <Small caret icon={<Ico><path d="M4 0h8l3.500 3v13H4z" fill="#fafafa" /><path d="M12 0v3h3.500z" fill="#888" /><path d="M1 3.500h6M0 6h6M0 8.500h4" stroke="#1f78d0" strokeWidth="1.300" /></Ico>} text="Accés fàcil" />
        </Col>
      </Group>
      <Group w="w-[137px]" label="Obre">
        <Big w="ml-[5px] w-[54px]" caret icon={<PageCheck s={30} />} lines={["Propietats", ""]} />
        <Col c="ml-[5px]">
          <Small caret icon={<Ico><path d="M0 0h16v16H0z" fill="#1161c0" /><path d="M0 15L6 7l6 8z" fill="#5cc8ff" /><path d="M6 16l5-6 5 6z" fill="#2d9bf0" /><circle cx="11.500" cy="4" r="1.500" fill="#fff" /></Ico>} text="Obre" />
          <Small icon={<Ico><path d="M2 0h9l3 3v13H2z" fill="#fafafa" /><path d="M6 12l7-9 2 2-7 8-3 1z" fill="#f2b32c" /></Ico>} text="Edita" />
          <Small dim icon={<Ico><path d="M0 0h9l2 2v12H0z" fill="#757575" /><circle cx="10.500" cy="10.500" r="5.500" fill="#969696" /><path d="M10.500 7v4l2.500-2" stroke="#333" strokeWidth="1.200" /></Ico>} text="Historial" />
        </Col>
      </Group>
      <Group w="w-[147px]" label="Selecciona">
        <Col c="ml-[7px]">
          <Small icon={<Squares f={["b", "b", "b", "b"]} />} text="Selecciona-ho tot" />
          <Small icon={<Squares f={["w", "w", "w", "w"]} />} text="No en seleccionis cap" />
          <Small icon={<Squares f={["w", "b", "b", "w"]} />} text="Inverteix la selecció" />
        </Col>
      </Group>
    </div>
  );
}

type NavItem = [string, React.ReactNode, boolean?, boolean?];
const NAV: { head: [string, React.ReactNode]; items: NavItem[] }[] = [
  { head: ["Accés ràpid", <Star />], items: [["Escriptori", <Desktop />, true], ["Downloads", <DownArrow />, true], ["Documents", <Doc />, true], ["Imatges", <Picture />, true], ["elcampalab (D:)", <Drive />, true], ["Google Drive (G:)", <GDrive />, true], ["00Classe", <Folder />], ["FCT", <Folder />], ["m0tutoria", <Folder />], ["pwd", <Folder />]] },
  { head: ["OneDrive - Personal", <Cloud />], items: [] },
  { head: ["Aquest ordinador", <Pc />], items: [["Documents", <Doc />], ["Downloads", <DownArrow />, false, true], ["Escriptori", <Desktop />], ["Imatges", <Picture />], ["Música", <Note />], ["Objectes de 3D", <Cube />], ["Vídeos", <Film />], ["Disc local (C:)", <Drive win />], ["elcampalab (D:)", <Drive />], ["Google Drive (G:)", <GDrive />]] },
  { head: ["Xarxa", <Net />], items: [] },
];

type Row = [string, string, string, string, React.ReactNode];
const FILES: { g: string; sel?: boolean; rows: Row[] }[] = [
  { g: "Avui (5)", sel: true, rows: [
    ["Extra_Unfinished4", "18/1/2024 15:51", "Fitxer PNG", "43 kB", <Png />],
    ["graphics-tiles-waterflow", "18/1/2024 15:51", "Fitxer PNG", "70 kB", <Png />],
    ["object- layer", "18/1/2024 15:51", "Fitxer PNG", "32 kB", <Png />],
    ["Cliff_tileset", "18/1/2024 15:51", "Fitxer PNG", "94 kB", <Png />],
    ["ground_tiles", "18/1/2024 15:51", "Fitxer PNG", "223 kB", <Png />],
  ] },
  { g: "Darrera setmana (2)", rows: [
    ["Calendari 2324", "10/1/2024 18:40", "Hoja de cálculo d...", "64 kB", <Xls />],
    ["SimpleWebXR", "9/1/2024 22:01", "Unity package file", "38 kB", <UnityCube />],
  ] },
  { g: "Fa molt temps (2)", rows: [
    ["Install-com.atteneder.gltfast-latest (2)", "11/10/2023 15:40", "Unity package file", "19 kB", <UnityCube />],
    ["Install-com.atteneder.ktx-latest (1)", "3/10/2023 12:38", "Unity package file", "19 kB", <UnityCube />],
  ] },
];

function FileTable() {
  return (
    <table className="w-full table-fixed border-collapse text-left">
      <colgroup><col className="w-[15px]" /><col className="w-[327px]" /><col className="w-36" /><col className="w-[120px]" /><col className="w-[77px]" /><col /></colgroup>
      <thead>
        <tr className="h-[27px] align-top text-[#dedede]">
          <th className="p-0" />
          <th className="p-0 font-normal"><div className="h-[25px] pl-[3px] leading-[25px]">Nom</div></th>
          <th className="p-0 font-normal">
            <div className="relative h-[25px] border-l border-[#636363] pl-1.5 leading-[25px]">Data de modificació
              <Ico s={8} vb="0 0 8 4" c="absolute -top-0.5 left-[68px]"><path d="M0 0l4 3.500L8 0" stroke="#999" /></Ico>
            </div>
          </th>
          <th className="p-0 font-normal"><div className="h-[25px] border-l border-[#636363] pl-1.5 leading-[25px]">Tipus</div></th>
          <th className="p-0 font-normal"><div className="h-[25px] border-l border-[#636363] pl-1.5 leading-[25px]">Mida</div></th>
          <th className="p-0"><div className="ml-[3px] h-[25px] border-l border-[#636363]" /></th>
        </tr>
      </thead>
      {FILES.map(({ g, sel, rows }) => (
        <tbody key={g}>
          <tr className="h-8">
            <th colSpan={6} scope="rowgroup" className="p-0 font-normal">
              <div className="flex items-center gap-1 pt-0.5 pr-1.5 pl-[7px] text-[14px] leading-5 text-white">
                <Ico s={11} vb="0 0 11 11"><path d="M0 3l5.500 5L11 3" stroke="#777" /></Ico>
                <span className="mr-1">{g}</span><span className="h-px flex-1 bg-[#333]" />
              </div>
            </th>
          </tr>
          {rows.map(([n, d, t, s, ic], i) => {
            const bg = sel ? (i === 1 ? "border border-x-0 border-[#505050] bg-[#777]" : "border border-x-0 border-[#505050] bg-[#636363]") : "";
            return (
              <tr key={n} className="h-[21px] text-[#dedede]">
                <td className="p-0" />
                <td className={"p-0 " + bg}><div className="flex items-center gap-1 pl-1 text-white">{ic}{n}</div></td>
                <td className={"p-0 pl-[7px] text-[11px] " + bg}>{d}</td>
                <td className={"p-0 pl-[7px] " + bg}>{t}</td>
                <td className={"p-0 pr-1 text-right text-[11px] " + bg}>{s}</td>
                <td className="p-0" />
              </tr>
            );
          })}
        </tbody>
      ))}
    </table>
  );
}

const Chev = () => <Ico s={8} vb="0 0 8 8"><path d="M2 0l4 4-4 4" stroke="#999" strokeWidth="1.300" /></Ico>;

function Explorer() {
  return (
    <section aria-label="Downloads" className="absolute top-[138px] left-[47px] flex h-[839px] w-[1075px] flex-col border border-t-0 border-[#3b3b3b] bg-[#191919] font-['Open_Sans',sans-serif] text-[12px] leading-4 text-white shadow-[0_4px_20px_rgba(0,0,0,0.5)]">
      <div className="flex h-[53px] shrink-0 bg-black">
        <div className="flex flex-col">
          <div className="flex h-[30px] items-center pl-2">
            <DownArrow /><span className="mr-2 ml-1.5 h-3.5 w-[3px] border-x border-[#555]" />
            <button aria-label="Properties"><PageCheck /></button>
            <button aria-label="New folder" className="ml-1.5"><Folder /></button>
            <button aria-label="Customize" className="ml-1.5"><Ico s={8} vb="0 0 8 8"><path d="M0 1h8" stroke="#fff" /><path d="M1 3.500h6L4 7z" fill="#fff" /></Ico></button>
            <span className="ml-2 h-3.5 w-[3px] border-x border-[#555]" />
          </div>
          <div className="flex h-[23px] items-stretch text-[11px]">
            <button className="w-[56px] bg-[#0067b8]">Fitxer</button>
            <button className="w-[49px] border border-b-0 border-[#2b2b2b] bg-[#202020]">Inici</button>
            <button className="w-[95px]">Ús compartit</button>
            <button className="w-[95px] pr-1">Visualització</button>
          </div>
        </div>
        <div className="flex w-[104px] flex-col text-[11px]">
          <div className="mt-[3px] flex h-[27px] items-center justify-center bg-[#eeec7c] text-[#222]">Administra</div>
          <button className="h-[23px] border-x border-[#1e1e1e]">Eines d'imatge</button>
        </div>
        <div className="h-[30px] flex-1 pl-3 leading-[30px]">Downloads</div>
        <div className="flex flex-col items-end">
          <div className="flex h-[30px] items-center gap-[33px] pr-[17px]">
            <button aria-label="Minimize"><Ico s={12} vb="0 0 12 12"><path d="M1 6.500h10" stroke="#fff" /></Ico></button>
            <button aria-label="Maximize"><Ico s={12} vb="0 0 12 12"><path d="M1.500 1.500h9v9h-9z" stroke="#fff" /></Ico></button>
            <button aria-label="Close"><Ico s={12} vb="0 0 12 12"><path d="M1 1l10 10M11 1L1 11" stroke="#fff" /></Ico></button>
          </div>
          <div className="flex h-[23px] items-center gap-2 pr-[3px]">
            <button aria-label="Collapse ribbon"><Ico s={12} vb="0 0 12 12"><path d="M2 8l4-4 4 4" stroke="#ccc" strokeWidth="1.800" /></Ico></button>
            <button aria-label="Help" className="flex size-4 items-center justify-center rounded-full bg-[#0a78d4] text-[12px] font-bold">?</button>
          </div>
        </div>
      </div>
      <Ribbon />
      <div className="flex h-[35px] shrink-0 items-center pr-3 pb-px pl-3">
        <button aria-label="Back"><Ico s={14}><path d="M15 8H2M7.500 2.500L2 8l5.500 5.500" stroke="#fff" strokeWidth="1.800" /></Ico></button>
        <button aria-label="Forward" className="ml-4"><Ico s={14}><path d="M1 8h13M8.500 2.500L14 8l-5.500 5.500" stroke="#888" strokeWidth="1.500" /></Ico></button>
        <button aria-label="Recent" className="ml-3"><Ico s={8} vb="0 0 8 8"><path d="M1 2.500l3 3 3-3" stroke="#ddd" strokeWidth="1.500" /></Ico></button>
        <button aria-label="Up" className="mr-1.5 ml-2.5"><Ico s={14}><path d="M8 15V2M2.500 7.500L8 2l5.500 5.500" stroke="#fff" strokeWidth="1.800" /></Ico></button>
        <div className="flex h-[22px] flex-1 items-center border border-[#535353] px-0.5">
          <DownArrow /><span className="mr-[7px] ml-1.5 flex"><Chev /></span>Aquest ordinador<span className="mr-[5px] ml-[3px] flex"><Chev /></span>Downloads
          <span className="ml-auto flex items-center gap-[7px]">
            <Ico s={10} vb="0 0 10 10"><path d="M1 3l4 4 4-4" stroke="#aaa" strokeWidth="1.700" /></Ico>
            <button aria-label="Refresh"><Ico s={12} vb="0 0 12 12"><path d="M2.500 4A4.300 4.300 0 1 0 8 2.500M4 .8h4.500v4" stroke="#aaa" strokeWidth="1.500" /></Ico></button>
          </span>
        </div>
        <label className="ml-3 flex h-[22px] w-[428px] items-center border border-[#535353] px-2">
          <input aria-label="Cerca" placeholder="Cerca a: Downloads" className="min-w-0 flex-1 bg-transparent outline-none placeholder:text-[#7c7c7c]" />
          <Ico s={12}><circle cx="10" cy="6" r="4.700" stroke="#bbb" strokeWidth="1.500" /><path d="M6.500 9.500L1 15" stroke="#bbb" strokeWidth="1.800" /></Ico>
        </label>
      </div>
      <div className="flex min-h-0 flex-1">
        <nav className="flex w-60 shrink-0 flex-col gap-2 border-r border-[#2b2b2b] pt-4 pr-[3px]">
          {NAV.map(({ head, items }) => (
            <div key={head[0]} className="flex flex-col">
              <a href="#nav" className="flex h-6 items-center gap-[5px] pl-6">{head[1]}{head[0]}</a>
              {items.map(([n, ic, pin, on]) => (
                <a href="#nav" key={n} className={"my-px flex h-[22px] items-center gap-[5px] pl-8 " + (on ? "bg-[#333]" : "")}>{ic}<span className="flex-1">{n}</span>{pin && <Pin />}</a>
              ))}
            </div>
          ))}
        </nav>
        <div className="min-w-0 flex-1 bg-[#202020]"><FileTable /></div>
      </div>
      <div className="flex h-[23px] shrink-0 items-center bg-[#333] pl-3.5 text-[11px] text-[#e6e6e6]">
        9 elements<span className="mx-2.5 h-[11px] w-px bg-white" />5 elements seleccionats: 459 kB<span className="ml-2.5 h-[11px] w-px bg-white" />
        <div className="ml-auto flex items-center pr-[7px]">
          <button aria-label="Details view" className="mr-1 flex h-[23px] w-[22px] items-center justify-center border border-[#999] bg-[#6b6b6b]"><Ico s={16}><path d="M0 1h5v4H0zM0 6h5v4H0zM0 11h5v4H0z" fill="#fff" /><path d="M2 3h1M2 8h1" stroke="#27c" /><path d="M2 13h1" stroke="#d22" /><path d="M6 3h4M11.500 3H16M6 8h4M11.500 8H16M6 13h4M11.500 13H16" stroke="#888" /></Ico></button>
          <button aria-label="Thumbnail view"><Picture /></button>
        </div>
      </div>
    </section>
  );
}

/* ---------- Windows taskbar ---------- */
const TI = ({ children, label, on = false, run = false }: Kids & { label: string; on?: boolean; run?: boolean }) => (
  <button aria-label={label} className={"flex h-10 w-12 shrink-0 flex-col items-center " + (on ? "bg-[#4b4b4b]" : "")}>
    <span className="flex h-[38px] items-center justify-center">{children}</span>
    {(on || run) && <span className={"h-0.5 bg-[#76b9ed] " + (on ? "w-12" : "w-10")} />}
  </button>
);

function Taskbar() {
  return (
    <footer className="flex h-10 shrink-0 items-center bg-[#1c1c1c] font-['Open_Sans',sans-serif] text-[12px] text-white">
      <button aria-label="Inicia" className="flex h-full w-12 items-center justify-center"><Ico s={16}><path d="M0 2.300L6.500 1.400v6.100H0zM7.300 1.300L16 0v7.500H7.300zM0 8.400h6.500v6.200L0 13.700zM7.300 8.400H16V16l-8.700-1.300z" fill="#fff" /></Ico></button>
      <label className="flex h-10 w-72 shrink-0 items-center gap-3 border border-[#5a5a5a] bg-[#333] pl-[11px]">
        <Ico s={16}><circle cx="10" cy="6" r="5.200" stroke="#eee" strokeWidth="1.200" /><path d="M6.300 9.700L.5 15.500" stroke="#eee" strokeWidth="1.300" /></Ico>
        <input aria-label="Cerca a Windows" placeholder="Escriu aquí per cercar" className="min-w-0 flex-1 bg-transparent text-[14px] outline-none placeholder:text-[#c8c8c8]" />
      </label>
      <TI label="Cortana"><Ico s={16}><circle cx="8" cy="8" r="6.700" stroke="#fff" strokeWidth="2" /></Ico></TI>
      <TI label="Visualització de tasques"><Ico s={16}><path d="M1 5h9v6H1zM.5 0v2.500h10V0M.5 16v-2.500h10V16M14 0v4M14 8v8" stroke="#fff" strokeWidth="1.200" /><path d="M13 4.500h2.500V7H13z" fill="#fff" /></Ico></TI>
      <div className="ml-[3px] flex gap-px">
        <TI label="XAMPP"><Ico s={24} vb="0 0 24 24"><rect width="24" height="24" rx="3" fill="#f37623" /><path d="M7 6c3-1.500 4 1 5 2.500C13 7 14 4.500 17 6c3 1.500 1 5-.5 6 2 1 3 4.500.5 6-2.500 1-4-1-5-2.500-1 1.500-2.500 3.500-5 2.500-2.500-1.500-1.500-5 .5-6C5 11 4.500 7.500 7 6z" stroke="#fff" strokeWidth="2.600" /></Ico></TI>
        <TI label="Explorador" on><Ico s={22} vb="0 0 22 22"><path d="M0 2h8l2 2h12v16H0z" fill="#f9cf5a" /><path d="M0 2h8l1 2H0z" fill="#e0a21e" /><path d="M4 20v-7h14v7h-4v-4H8v4z" fill="#4a9ee0" /></Ico></TI>
        <TI label="Chrome"><span className="mt-[3px] ml-[3px]"><Chrome /></span></TI>
        <TI label="Visual Studio Code"><Ico s={24} vb="0 0 24 24"><path d="M0 8.500L2 7l16 12v4L0 10z" fill="#0d7cc4" /><path d="M0 15.500L2 17 18 5V1L0 14z" fill="#1a8fdc" /><path d="M17.500 0L24 3v18l-6.500 3z" fill="#2aa6f2" /></Ico></TI>
        <TI label="Chrome J" run><span className="mt-[3px] ml-[3px]"><Chrome><circle cx="18.500" cy="18.500" r="8" fill="#7a1fa2" /><text x="18.500" y="22" fontSize="10" textAnchor="middle" fill="#fff" fontFamily="Open Sans">J</text></Chrome></span></TI>
        <TI label="Unity" run><UnityCube s={24} /></TI>
        <TI label="Photoshop" run><span className="flex size-6 items-center justify-center border-2 border-[#7cb8f2] bg-[#0a0446] text-[13px] leading-none font-semibold text-[#8cc6ff]">Ps</span></TI>
        <TI label="Chrome perfil" run><span className="mt-[3px] ml-[3px]"><Chrome><circle cx="18.500" cy="19" r="7.500" fill="#111" /><circle cx="18.500" cy="21.500" r="4" fill="#e0a58c" /><path d="M11.500 20c1-6 11-8 13-2l-6 1-3 3z" fill="#000" /><path d="M23 23l3-2v5z" fill="#e8c0d0" /></Chrome></span></TI>
      </div>
      <div className="ml-auto flex items-center">
        <span className="mr-2.5 size-5 rounded-full bg-linear-to-br from-[#f7b52c] to-[#f4620c]" />
        <span className="text-[14px]">20°C</span><span className="ml-2 text-[14px]">Soleado</span>
        <button aria-label="Icones amagades" className="ml-[22px]"><Ico s={12} vb="0 0 12 12"><path d="M1 8.500l5-5 5 5" stroke="#fff" strokeWidth="1.200" /></Ico></button>
        <Ico s={16} c="ml-3"><path d="M5.500 5.500h9v7h-9z" stroke="#fff" /><path d="M7 7h6v4H7zM15 7.500h1v3h-1zM0 4h4v4H0zM.5 2h1v2h-1zM2.500 2h1v2h-1zM1.500 8h1v2h3v1h-4z" fill="#fff" /></Ico>
        <Ico s={14} c="ml-2.5"><path d="M1.500 16A14.500 14.500 0 0 1 16 1.500M5.500 16A10.500 10.500 0 0 1 16 5.500M9.500 16A6.500 6.500 0 0 1 16 9.500" stroke="#ddd" strokeWidth="1.200" /><circle cx="14" cy="14" r="2" fill="#fff" /></Ico>
        <Ico s={15} c="ml-2"><path d="M1 5.500h2.500L8 1.500v13l-4.500-4H1zM10.500 5.500l5 5M15.500 5.500l-5 5" stroke="#fff" strokeWidth="1.200" /></Ico>
        <button className="ml-3">CAT</button>
        <button className="ml-3.5 text-center text-[11px] leading-[18px]"><div>15:52</div><div>18/1/2024</div></button>
        <button aria-label="Notificacions" className="mr-[21px] ml-[18px]"><Ico s={16}><path d="M0 0h16v12.500H11L8 16l-3-3.500H0z" fill="#fff" /><path d="M3 3.500h10M3 6h10M3 8.500h6" stroke="#222" /></Ico></button>
        <span className="mr-[3px] h-10 w-px bg-[#6a6a6a]" />
      </div>
    </footer>
  );
}

/* ---------- Annotation arrows drawn across the windows ---------- */
const ARROWS = [
  [971, 392, 1166, 692], [950, 417, 1166, 723], [960, 447, 1206, 800], [971, 476, 1210, 865],
  [1214, 591, 1188, 669], [1254, 581, 1245, 665], [1311, 573, 1305, 668],
];
function Arrows() {
  return (
    <svg width="1920" height="1080" viewBox="0 0 1920 1080" className="pointer-events-none absolute top-0 left-0" aria-hidden="true">
      {ARROWS.map(([x1, y1, x2, y2], i) => {
        const l = Math.hypot(x2 - x1, y2 - y1), ux = (x2 - x1) / l, uy = (y2 - y1) / l, bx = x2 - ux * 19, by = y2 - uy * 19;
        return (
          <g key={i} fill="#fff" stroke="#fff">
            <path d={`M${x1} ${y1}L${bx} ${by}`} strokeWidth="2" />
            <path d={`M${x2} ${y2}L${bx - uy * 5} ${by + ux * 5}L${bx + uy * 5} ${by - ux * 5}z`} stroke="none" />
          </g>
        );
      })}
    </svg>
  );
}

export default function App() {
  return (
    <div className="relative flex h-screen flex-col overflow-hidden bg-[#191919] font-['Inter',sans-serif] text-[12px] leading-4 text-[#c4c4c4]">
      <UnityTop />
      <main className="flex min-h-0 flex-1 gap-0.5 bg-[#191919]">
        <div className="flex min-w-0 flex-1 flex-col gap-0.5">
          <div className="flex min-h-0 flex-1 gap-0.5"><ScenePanel /><HierarchyPanel /></div>
          <div className="flex h-[384px] shrink-0 gap-0.5"><ConsolePanel /><ProjectPanel /></div>
        </div>
        <InspectorPanel />
      </main>
      <UnityStatus />
      <Taskbar />
      <Explorer />
      <Arrows />
    </div>
  );
}
